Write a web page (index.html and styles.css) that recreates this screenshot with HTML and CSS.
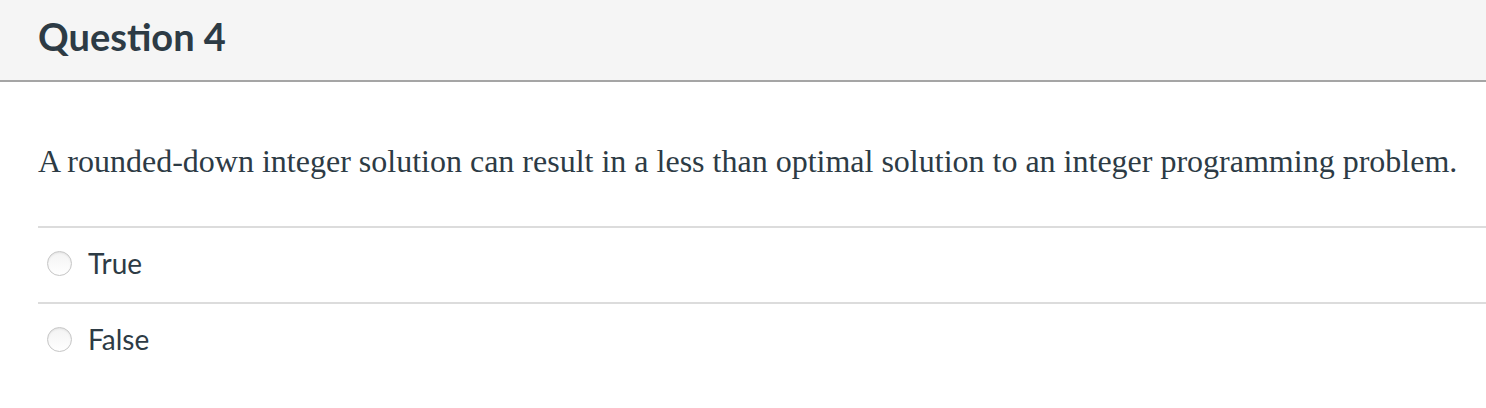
FILE: index.html
```html
<!DOCTYPE html>
<html>
<head>
<meta charset="utf-8">
<link rel="stylesheet" href="styles.css">
</head>
<body>
<div class="question">
  <div class="header">
    <h2 class="title">Question 4</h2>
  </div>
  <div class="content">
    <p class="text">A rounded-down integer solution can result in a less than optimal solution to an integer programming problem.</p>
    <div class="answers">
      <label class="answer"><span class="radio"></span><span class="label">True</span></label>
      <label class="answer"><span class="radio"></span><span class="label">False</span></label>
    </div>
  </div>
</div>
</body>
</html>
```
FILE: styles.css
```css
html, body { margin: 0; padding: 0; background: #fff; }
body { width: 1486px; height: 408px; overflow: hidden; color: #2d3b45; }
.header {
  height: 80px;
  background: #f5f5f5;
  border-bottom: 2px solid #a5a5a5;
  display: flex;
  align-items: center;
  padding-left: 38px;
}
.title {
  margin: 0;
  font-family: Lato, "Liberation Sans", sans-serif;
  font-weight: 700;
  font-size: 38px;
  color: #2d3b45;
  line-height: 1;
  padding-bottom: 8px;
}
.content { padding-left: 38px; }
.text {
  margin: 0;
  padding-top: 62px;
  height: 82px;
  font-family: "Liberation Serif", "Times New Roman", serif;
  font-size: 32px;
  line-height: 34px;
  color: #2d3b45;
}
.answer {
  display: flex;
  align-items: center;
  height: 74px;
  border-top: 2px solid #dcdcdc;
}
.radio {
  width: 23px;
  height: 23px;
  border-radius: 50%;
  border: 1px solid #c6c6c6;
  background: linear-gradient(#f3f3f3, #ffffff);
  box-shadow: inset 0 1px 2px rgba(0,0,0,0.08);
  margin-left: 9px;
  margin-right: 16px;
  margin-bottom: 3px;
  flex: none;
}
.label {
  font-family: Lato, "Liberation Sans", sans-serif;
  font-size: 28px;
  line-height: 1;
  padding-bottom: 5px;
  color: #2d3b45;
}
```
